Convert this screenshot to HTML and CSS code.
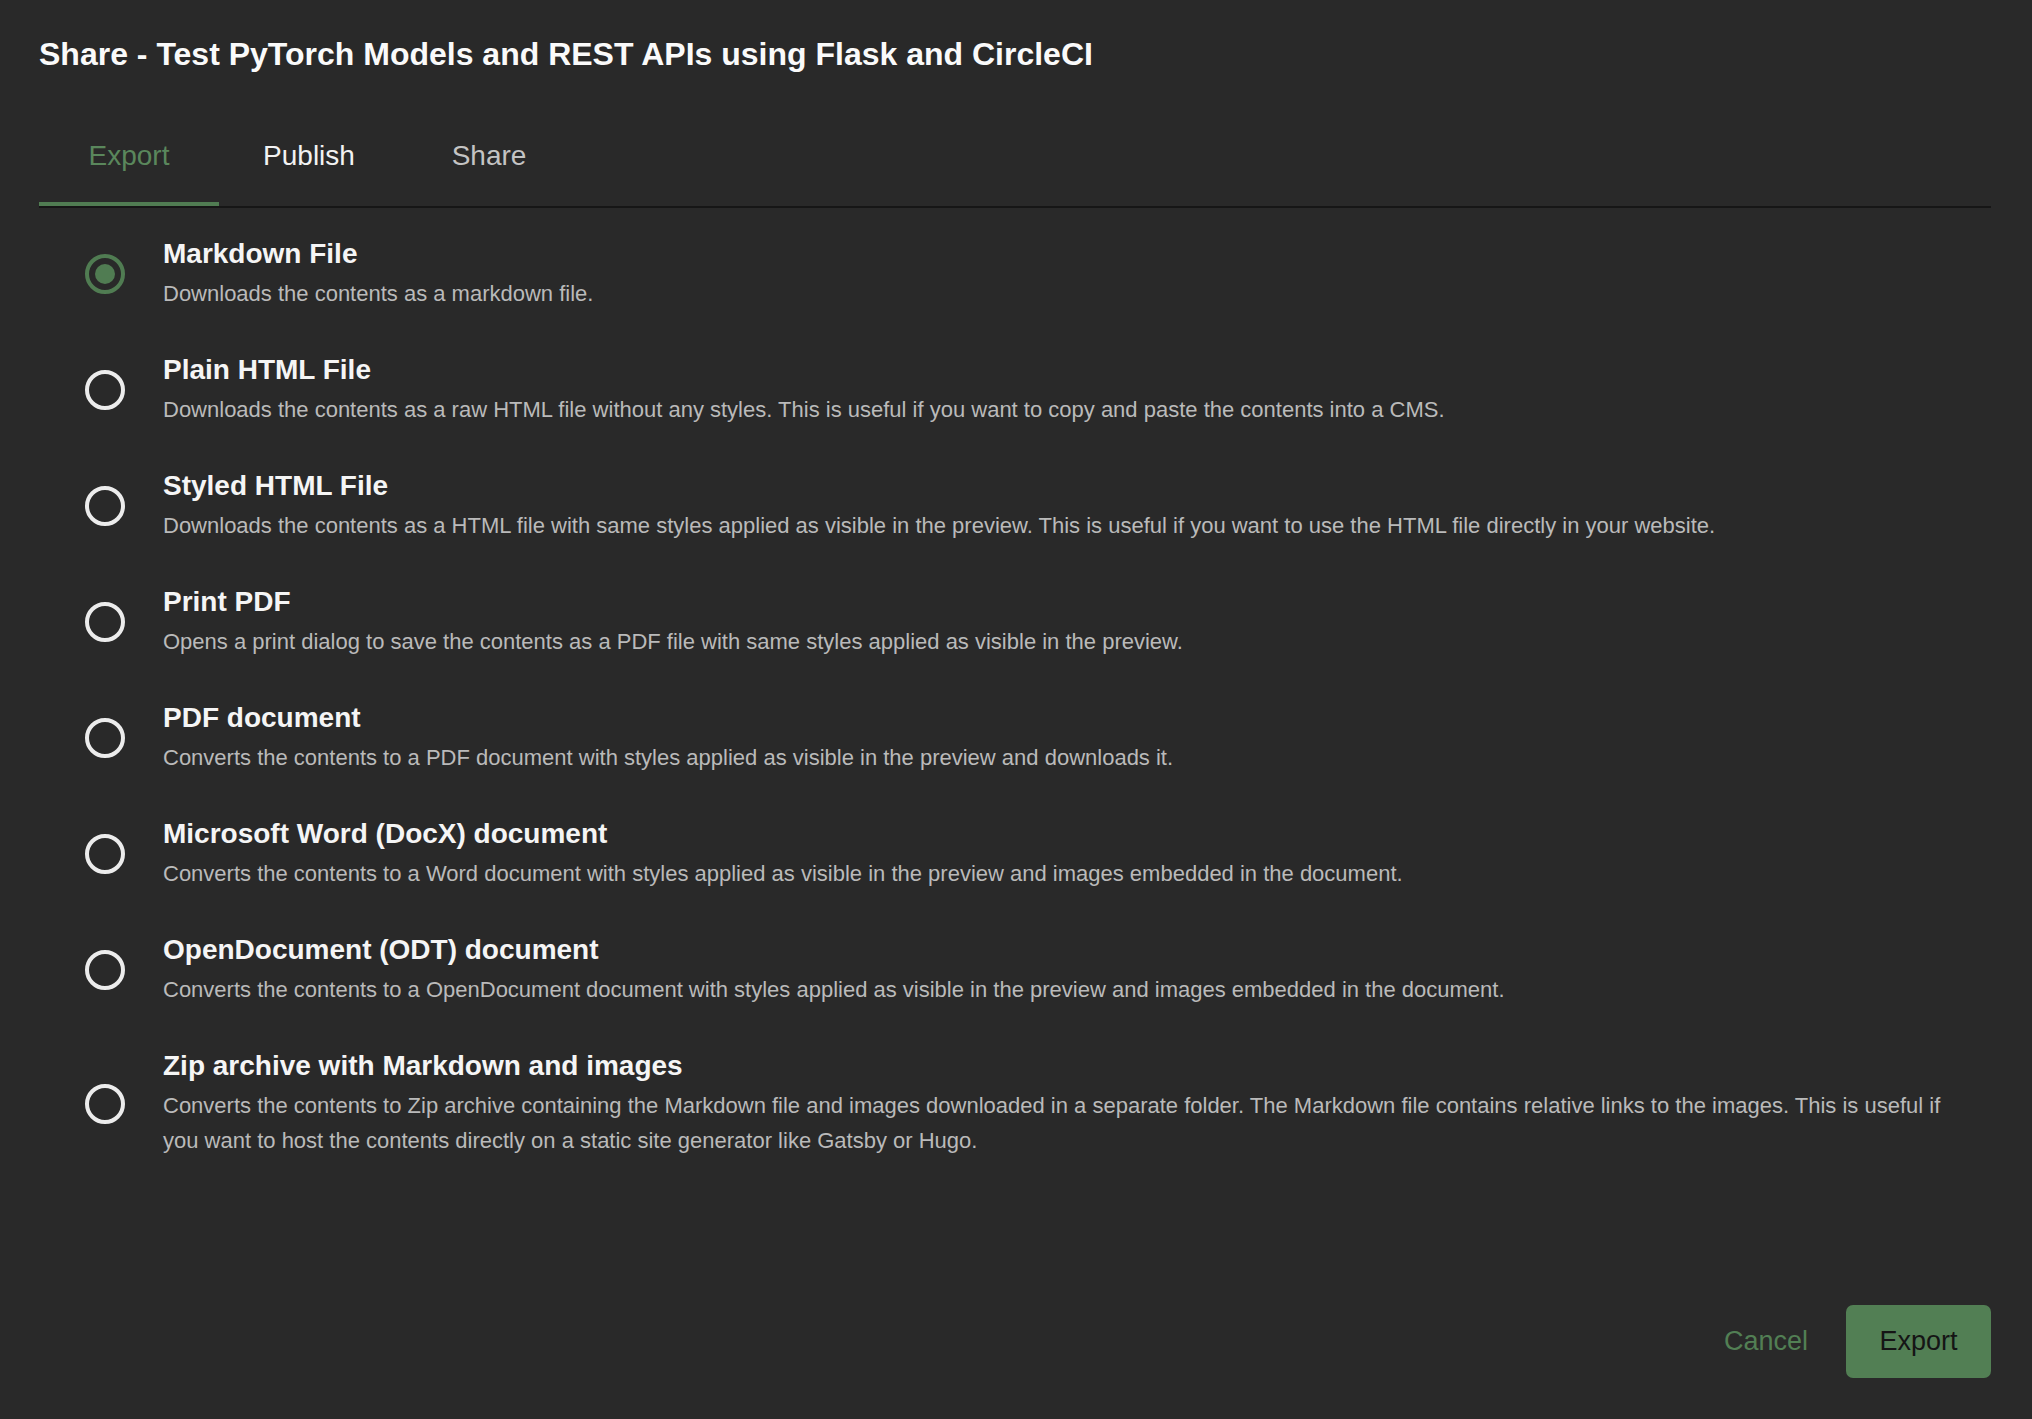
FILE: index.html
```html
<!DOCTYPE html>
<html lang="en">
<head>
<meta charset="utf-8">
<title>Share</title>
<link rel="stylesheet" href="styles.css">
</head>
<body>
<div class="dialog">
  <h1 class="title">Share - Test PyTorch Models and REST APIs using Flask and CircleCI</h1>
  <div class="tabs">
    <div class="tab tab-active">Export</div>
    <div class="tab tab-publish">Publish</div>
    <div class="tab tab-share">Share</div>
  </div>
  <div class="options">
    <div class="option">
      <span class="radio radio-checked"></span>
      <div class="option-text">
        <div class="option-title">Markdown File</div>
        <div class="option-desc">Downloads the contents as a markdown file.</div>
      </div>
    </div>
    <div class="option">
      <span class="radio"></span>
      <div class="option-text">
        <div class="option-title">Plain HTML File</div>
        <div class="option-desc">Downloads the contents as a raw HTML file without any styles. This is useful if you want to copy and paste the contents into a CMS.</div>
      </div>
    </div>
    <div class="option">
      <span class="radio"></span>
      <div class="option-text">
        <div class="option-title">Styled HTML File</div>
        <div class="option-desc">Downloads the contents as a HTML file with same styles applied as visible in the preview. This is useful if you want to use the HTML file directly in your website.</div>
      </div>
    </div>
    <div class="option">
      <span class="radio"></span>
      <div class="option-text">
        <div class="option-title">Print PDF</div>
        <div class="option-desc">Opens a print dialog to save the contents as a PDF file with same styles applied as visible in the preview.</div>
      </div>
    </div>
    <div class="option">
      <span class="radio"></span>
      <div class="option-text">
        <div class="option-title">PDF document</div>
        <div class="option-desc">Converts the contents to a PDF document with styles applied as visible in the preview and downloads it.</div>
      </div>
    </div>
    <div class="option">
      <span class="radio"></span>
      <div class="option-text">
        <div class="option-title">Microsoft Word (DocX) document</div>
        <div class="option-desc">Converts the contents to a Word document with styles applied as visible in the preview and images embedded in the document.</div>
      </div>
    </div>
    <div class="option">
      <span class="radio"></span>
      <div class="option-text">
        <div class="option-title">OpenDocument (ODT) document</div>
        <div class="option-desc">Converts the contents to a OpenDocument document with styles applied as visible in the preview and images embedded in the document.</div>
      </div>
    </div>
    <div class="option">
      <span class="radio"></span>
      <div class="option-text">
        <div class="option-title">Zip archive with Markdown and images</div>
        <div class="option-desc">Converts the contents to Zip archive containing the Markdown file and images downloaded in a separate folder. The Markdown file contains relative links to the images. This is useful if you want to host the contents directly on a static site generator like Gatsby or Hugo.</div>
      </div>
    </div>
  </div>
  <div class="footer">
    <button class="btn-cancel">Cancel</button>
    <button class="btn-export">Export</button>
  </div>
</div>
</body>
</html>
```
FILE: styles.css
```css
html, body {
  margin: 0;
  padding: 0;
  background: #292929;
}
body {
  font-family: "Liberation Sans", Arial, sans-serif;
  color: #f0f0f0;
}
.dialog {
  box-sizing: border-box;
  height: 1419px;
  padding: 35px 41px 41px 39px;
  display: flex;
  flex-direction: column;
}
.title {
  margin: 0;
  font-size: 32px;
  line-height: 38px;
  font-weight: bold;
  color: #fafafa;
}
.tabs {
  display: flex;
  border-bottom: 2px solid #161616;
  margin-top: 45px;
}
.tab {
  box-sizing: border-box;
  min-width: 180px;
  text-align: center;
  font-size: 28px;
  line-height: 32px;
  padding: 22px 20px 30px 20px;
  border-bottom: 4px solid transparent;
  color: #f2f2f2;
}
.tab-active {
  color: #5a875c;
  border-bottom-color: #507c52;
}
.tab-share {
  color: #c4c4c4;
}
.options {
  padding-top: 29px;
  display: flex;
  flex-direction: column;
  gap: 42px;
}
.option {
  display: flex;
  align-items: center;
  padding-right: 40px;
}
.radio {
  box-sizing: border-box;
  flex: none;
  width: 40px;
  height: 40px;
  margin-left: 46px;
  margin-right: 38px;
  border: 4px solid #ececec;
  border-radius: 50%;
  display: flex;
  align-items: center;
  justify-content: center;
}
.radio-checked {
  border-color: #507c52;
}
.radio-checked::after {
  content: "";
  width: 20px;
  height: 20px;
  border-radius: 50%;
  background: #507c52;
}
.option-title {
  font-size: 28px;
  line-height: 34px;
  font-weight: bold;
  color: #f5f5f5;
  margin-bottom: 5px;
}
.option-desc {
  font-size: 22px;
  line-height: 35px;
  color: #bababa;
}
.footer {
  margin-top: auto;
  display: flex;
  justify-content: flex-end;
  align-items: center;
  gap: 38px;
}
.btn-cancel, .btn-export {
  font-family: "Liberation Sans", Arial, sans-serif;
  font-size: 27px;
  border: none;
  cursor: pointer;
}
.btn-cancel {
  background: none;
  color: #527f54;
  padding: 0;
}
.btn-export {
  background: #527f54;
  color: #151515;
  width: 145px;
  height: 73px;
  border-radius: 7px;
  padding: 0;
}
```
